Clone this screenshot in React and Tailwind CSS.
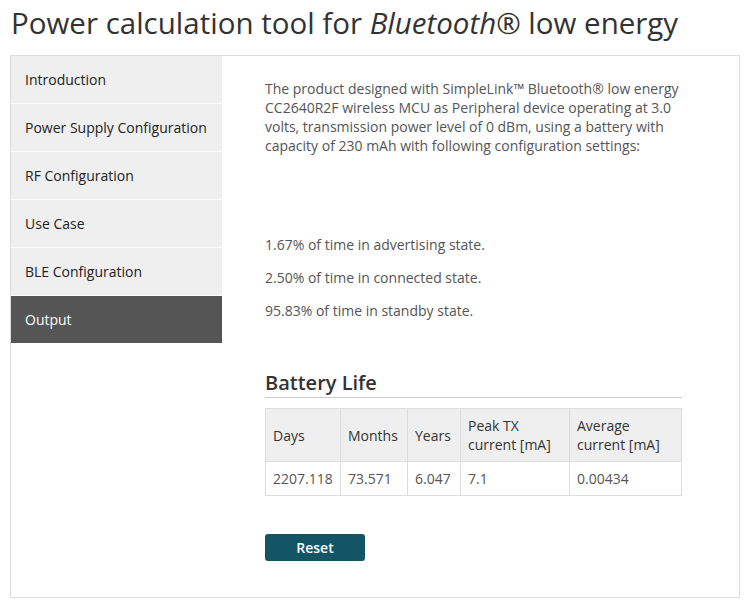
export default function App() {
    const nav = ['Introduction', 'Power Supply Configuration', 'RF Configuration', 'Use Case', 'BLE Configuration', 'Output'];

    return (
        <div className="w-[750px] h-[616px] bg-white text-[#333] font-['Open_Sans',sans-serif]">
            <h1 className="pl-[11px] pt-[4px] h-[55px] text-[29.5px] leading-[38px] text-[#333]">
                Power calculation tool for <i>Bluetooth</i>® low energy
            </h1>

            <div className="ml-[10px] w-[730px] h-[543px] border border-[#ddd] flex">
                {/* Sidebar */}
                <div className="w-[211px] flex flex-col">
                    {nav.map((item) => (
                        <div
                            key={item}
                            className={
                                item === 'Output'
                                    ? 'h-[47px] flex items-center pl-[14px] text-[14px] bg-[#555] text-white'
                                    : 'h-[47px] mb-px flex items-center pl-[14px] text-[14px] bg-[#efefef] text-[#222]'
                            }
                        >
                            {item}
                        </div>
                    ))}
                </div>

                {/* Content */}
                <div className="pl-[43px] pt-[23px] w-[460px] text-[14px] leading-[19px] text-[#555]">
                    <p>
                        The product designed with SimpleLink™ Bluetooth® low energy CC2640R2F wireless MCU as Peripheral
                        device operating at 3.0 volts, transmission power level of 0 dBm, using a battery with capacity of
                        230 mAh with following configuration settings:
                    </p>

                    <div className="mt-[80px] flex flex-col gap-[14px]">
                        <p>1.67% of time in advertising state.</p>
                        <p>2.50% of time in connected state.</p>
                        <p>95.83% of time in standby state.</p>
                    </div>

                    <h2 className="mt-[50px] text-[20px] leading-[26px] font-semibold text-[#333] border-b border-[#ccc] pb-[1px]">
                        Battery Life
                    </h2>

                    <table className="mt-[10px] w-[417px] border-collapse text-[14px] leading-[19px]">
                        <thead>
                            <tr className="bg-[#efefef] text-[#333] h-[53px]">
                                <th className="border border-[#ddd] font-normal text-left px-[7px] w-[75px]">Days</th>
                                <th className="border border-[#ddd] font-normal text-left px-[7px] w-[67px]">Months</th>
                                <th className="border border-[#ddd] font-normal text-left px-[7px] w-[53px]">Years</th>
                                <th className="border border-[#ddd] font-normal text-left px-[7px] w-[109px]">Peak TX current [mA]</th>
                                <th className="border border-[#ddd] font-normal text-left px-[7px]">Average current [mA]</th>
                            </tr>
                        </thead>
                        <tbody>
                            <tr className="h-[34px] text-[#555]">
                                <td className="border border-[#ddd] px-[7px]">2207.118</td>
                                <td className="border border-[#ddd] px-[7px]">73.571</td>
                                <td className="border border-[#ddd] px-[7px]">6.047</td>
                                <td className="border border-[#ddd] px-[7px]">7.1</td>
                                <td className="border border-[#ddd] px-[7px]">0.00434</td>
                            </tr>
                        </tbody>
                    </table>

                    <button className="mt-[38px] w-[100px] h-[27px] rounded-[3px] bg-[#135565] text-white font-semibold text-[14px]">
                        Reset
                    </button>
                </div>
            </div>
        </div>
    );
}
